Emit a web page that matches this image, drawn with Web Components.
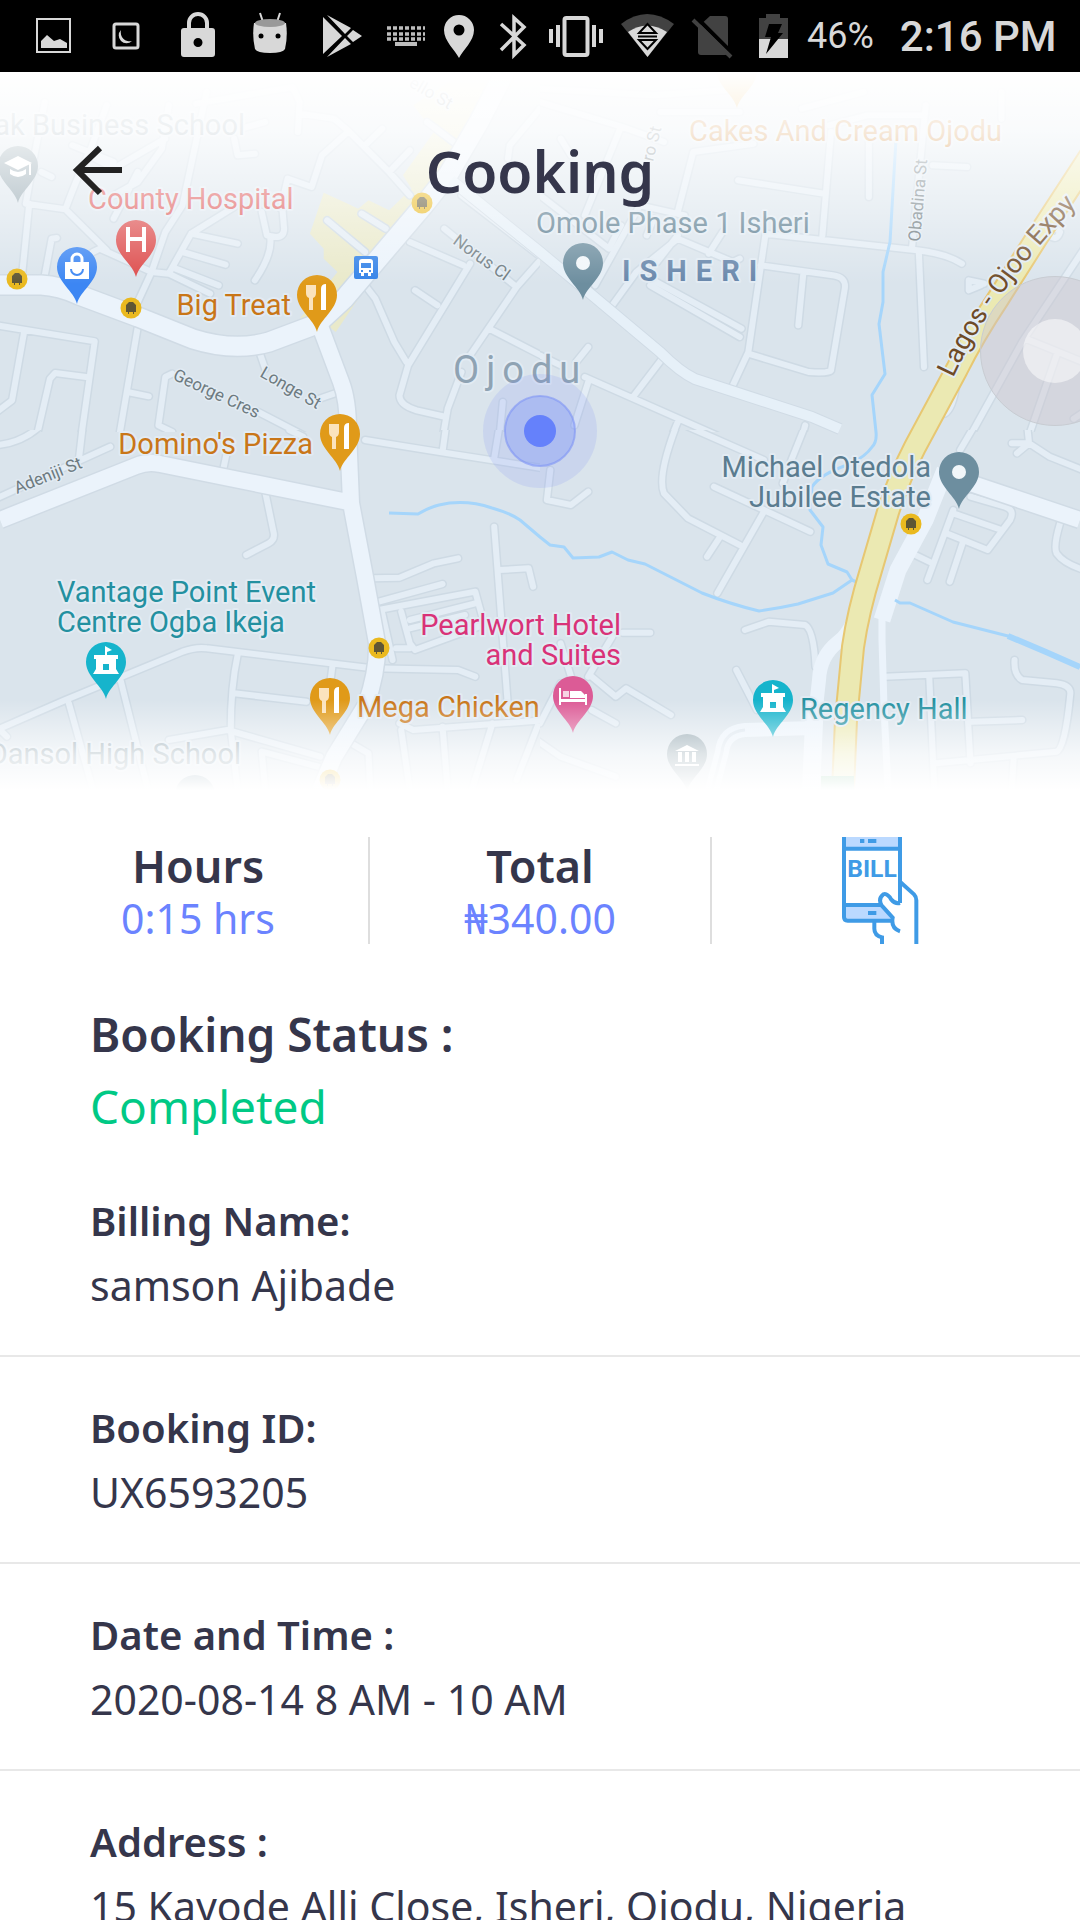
<!DOCTYPE html>
<html lang="en">
<head>
<meta charset="utf-8">
<meta name="viewport" content="width=device-width, initial-scale=1">
<title>Cooking booking</title>
<style>
  html, body { margin: 0; background: #fff; }
  body { font-family: "Noto Sans", "Open Sans", sans-serif; color: #35364b; }
</style>
</head>
<body>
<booking-screen>
  <status-bar slot="status"></status-bar>
  <area-map slot="map"></area-map>
  <screen-header slot="header">Cooking</screen-header>
  <assist-button slot="assist"></assist-button>
  <booking-stats>
    <stat-cell><span slot="label">Hours</span><span slot="value">0:15 hrs</span></stat-cell>
    <stat-cell><span slot="label">Total</span><span slot="value">₦340.00</span></stat-cell>
    <bill-button></bill-button>
  </booking-stats>
  <booking-status><span slot="label">Booking Status :</span>Completed</booking-status>
  <detail-row><span slot="label">Billing Name:</span>samson Ajibade</detail-row>
  <detail-row><span slot="label">Booking ID:</span>UX6593205</detail-row>
  <detail-row><span slot="label">Date and Time :</span>2020-08-14 8 AM - 10 AM</detail-row>
  <detail-row><span slot="label">Address :</span>15 Kayode Alli Close, Isheri, Ojodu, Nigeria</detail-row>
</booking-screen>

<script>
const define = (name, html) => {
  const template = document.createElement('template');
  template.innerHTML = html;
  customElements.define(name, class extends HTMLElement {
    constructor() {
      super();
      this.attachShadow({ mode: 'open' }).append(template.content.cloneNode(true));
    }
  });
};

define('booking-screen', `
  <style>
    :host { display: flex; flex-direction: column; height: 100vh; overflow: hidden; background: #fff; }
    main { flex: 1; min-height: 0; overflow-y: auto; scrollbar-width: none; }
    .hero { position: relative; margin-bottom: 47px; overflow: hidden; }
    .over { position: absolute; inset: 0 0 auto 0; }
    .assist { position: absolute; right: -50px; top: 204px; }
  </style>
  <slot name="status"></slot>
  <main>
    <div class="hero">
      <slot name="map"></slot>
      <div class="over"><slot name="header"></slot></div>
      <div class="assist"><slot name="assist"></slot></div>
    </div>
    <slot></slot>
  </main>`);

define('status-bar', `
  <style>
    :host { display: flex; justify-content: space-between; align-items: center; height: 72px; padding: 0 30px 0 18px;
      background: #000; color: #d8d8d8; font-family: Roboto, sans-serif; box-sizing: border-box; white-space: nowrap; overflow: hidden; }
    .group { display: flex; align-items: center; }
    svg { display: block; height: 72px; fill: #d8d8d8; }
    .battery { font-size: 36px; }
    .clock { font-size: 42px; font-weight: 500; margin-left: 26px; }
  </style>
  <div class="group">
    <svg width="72" viewBox="18 0 72 72" aria-hidden="true"><path d="M37 19h33v33h-33z" fill="none" stroke="#d8d8d8" stroke-width="2"/><path d="M41 48v-7l6-6 7 6 6-2 7 4v5z"/></svg>
    <svg width="72" viewBox="90 0 72 72" aria-hidden="true"><rect x="114" y="24" width="24" height="24" rx="2" fill="none" stroke="#d8d8d8" stroke-width="3"/><path d="M121 30a7 7 0 1 0 11 11a9 9 0 0 1-11-11z"/></svg>
    <svg width="72" viewBox="162 0 72 72" aria-hidden="true"><path fill-rule="evenodd" d="M187 28v-5a11 11 0 0 1 22 0v5h3q3 0 3 3v23q0 3-3 3h-28q-3 0-3-3V31q0-3 3-3zM191 28h14v-5a7 7 0 0 0-14 0zM198 38a4 4 0 1 0 0 9a4 4 0 0 0 0-9z"/></svg>
    <svg width="72" viewBox="234 0 72 72" aria-hidden="true"><path d="M260 13l3 9M280 13l-3 9" stroke="#d8d8d8" stroke-width="2"/><path d="M254 23h32q2 13-1 26-2 4-15 4t-15-4q-3-13-1-26z"/><ellipse cx="270" cy="23" rx="15" ry="4" fill="#999"/><circle cx="261" cy="36" r="2.500" fill="#000"/><circle cx="278" cy="36" r="2.500" fill="#000"/></svg>
    <svg width="72" viewBox="306 0 72 72" aria-hidden="true"><path d="M323 17l19 19-19 18zM327 15l24 13-6 6zM327 57l24-13-6-6zM353 30l9 6-9 6-6-6z"/></svg>
    <svg width="56" viewBox="378 0 56 72" aria-hidden="true"><path d="M387 28h38M387 34h38M387 39h38" stroke="#bdbdbd" stroke-width="3.500" stroke-dasharray="4 2"/><path d="M395 44h22" stroke="#bdbdbd" stroke-width="4"/></svg>
    <svg width="52" viewBox="434 0 52 72" aria-hidden="true"><path fill-rule="evenodd" d="M459 58C455 50 444 41 444 30a15 15 0 0 1 30 0C474 41 463 50 459 58zM459 24.500a5.500 5.500 0 1 0 0 11a5.500 5.500 0 0 0 0-11z"/></svg>
    <svg width="55" viewBox="486 0 55 72" aria-hidden="true"><path d="M501 24l23 21-10 10V18l10 9-23 23" fill="none" stroke="#d8d8d8" stroke-width="3.500"/></svg>
    <svg width="70" viewBox="541 0 70 72" aria-hidden="true"><rect x="564.500" y="18" width="23" height="37" rx="2" fill="none" stroke="#d8d8d8" stroke-width="4"/><path d="M556 25h4v22h-4zM549 29h4v14h-4zM592 25h4v22h-4zM599 29h4v14h-4z"/></svg>
    <svg width="72" viewBox="611 0 72 72" aria-hidden="true"><path d="M621 24q26-20 53 0L647.500 57z" fill="#424242"/><path d="M628 32q19-13 39 0L647.500 57z"/><path d="M639 33l8.500-9 8.500 9zM639 40h17l-8.500 9z" stroke="#000" stroke-width="2"/><path d="M638 36.500h19" stroke="#000" stroke-width="2"/></svg>
    <svg width="58" viewBox="683 0 58 72" aria-hidden="true"><path d="M710 16h15q3 0 3 3v33q0 3-3 3h-24q-3 0-3-3V27z" fill="#424242"/><path d="M696 17l37 37" stroke="#000" stroke-width="4"/><path d="M693 20l38 37" stroke="#424242" stroke-width="4"/></svg>
    <svg width="66" viewBox="741 0 66 72" aria-hidden="true"><path d="M759 18h7v-4h14v4h8v22h-29z" fill="#424242"/><path d="M759 39h29v19h-29z"/><path d="M769 24h13l-4 9h5l-17 21 5-17h-6z" fill="#000"/></svg>
  </div>
  <div class="group"><span class="battery">46%</span><span class="clock">2:16 PM</span></div>`);

define('screen-header', `
  <style>
    :host { display: grid; grid-template-columns: 1fr auto 1fr; align-items: center; height: 198px; padding: 0 64px; box-sizing: border-box; }
    button { justify-self: start; border: 0; padding: 0; background: none; width: 68px; height: 68px; cursor: pointer; }
    svg { display: block; }
    h1 { margin: 0; font-size: 57px; line-height: 80px; font-weight: 600; }
  </style>
  <button aria-label="Back"><svg width="68" height="68" viewBox="64 136 68 68" fill="none" stroke="#222" stroke-width="6"><path d="M122 169H78M100 147L77 169l23 23"/></svg></button>
  <h1><slot></slot></h1>`);

define('assist-button', `
  <style>
    :host { display: block; }
    button { display: grid; place-items: center; width: 150px; height: 150px; padding: 0; border: 1px solid #c8ccd2; border-radius: 50%; background: rgb(205 198 206 / .45); }
    span { width: 64px; height: 64px; border-radius: 50%; background: rgb(255 255 255 / .5); }
  </style>
  <button aria-label="Assistive menu"><span></span></button>`);

define('booking-stats', `
  <style>
    :host { display: flex; height: 107px; margin: 0 28px; }
    ::slotted(*) { flex: 1 1 0; }
    ::slotted(:not(:first-child)) { border-left: 2px solid #dedede; }
  </style><slot></slot>`);

define('stat-cell', `
  <style>
    :host { display: flex; flex-direction: column; align-items: center; justify-content: flex-end; line-height: 52px; white-space: nowrap; }
    .label { font-size: 45px; font-weight: 600; }
    .value { font-size: 41px; color: #6b83ff; }
  </style>
  <div class="label"><slot name="label"></slot></div>
  <div class="value"><slot name="value"></slot></div>`);

define('bill-button', `
  <style>
    :host { display: flex; justify-content: center; }
    button { border: 0; padding: 0; background: none; height: 107px; }
    svg { display: block; }
    text { font: 700 74px Roboto, sans-serif; fill: #3f9be6; stroke: none; }
  </style>
  <button aria-label="Bill"><svg width="80" height="107" viewBox="846 51 240 321" fill="none" stroke="#3f9be6" stroke-width="12">
    <path d="M852 40h168v46H852zM852 255h110l34 46H862q-10 0-10-10z" fill="#bbd9ff" stroke="none"/>
    <path d="M852 40v251q0 11 11 11h136M1020 40v209M852 86h168M852 255h110"/>
    <path d="M900 63h13M924 63h25M924 279h25"/>
    <path d="M1020 249q-14 4-26-10-12-20-24-16-16 12-6 32l34 38q-6 32 22 41M943 304v22q0 20 23 26v30M1020 185l42 38q7 7 7 18v140"/>
    <text x="936" y="170" text-anchor="middle">BILL</text></svg></button>`);

define('booking-status', `
  <style>
    :host { display: block; padding: 54px 90px 8px; font-size: 46px; line-height: 72px; }
    .label { font-weight: 600; }
    .value { color: #00c985; }
  </style>
  <div class="label"><slot name="label"></slot></div><div class="value"><slot></slot></div>`);

define('detail-row', `
  <style>
    :host { display: block; padding: 38px 90px 37px; border-bottom: 2px solid #e8e8e8; font-size: 41px; line-height: 65px; }
    .label { font-size: 40px; font-weight: 600; }
  </style>
  <div class="label"><slot name="label"></slot></div><div><slot></slot></div>`);

define('area-map', `
  <style>
    :host { display: block; }
    svg { display: block; }
    .root { width: 100%; height: auto; }
    path { stroke-linejoin: round; }
    .street { fill: none; stroke-linecap: round; vector-effect: non-scaling-stroke; }
    .edge { stroke: #cedae4; }
    .lane { stroke: #e4edf5; }
    .river { fill: none; stroke: #a5d5fb; stroke-width: 3; }
    text { font-family: Roboto, sans-serif; font-size: 29px; paint-order: stroke; stroke: #e2ebf3; stroke-width: 4px; stroke-linejoin: round; }
    .end { text-anchor: end; }
    .small { font-size: 17px; fill: #6d7a80; stroke-width: 3px; }
    .food { fill: #c97618; } .event { fill: #2390a0; } .hotel { fill: #d93278; } .place { fill: #5a7c8f; } .school { fill: #90a4ae; }
  </style>
  <svg class="root" viewBox="0 72 1080 718" role="img" aria-label="Map of Ojodu">
    <defs>
      <linearGradient id="top" x1="0" y1="0" x2="0" y2="1"><stop offset="0" stop-color="#fff"/><stop offset=".28" stop-color="#fff" stop-opacity=".84"/><stop offset=".6" stop-color="#fff" stop-opacity=".48"/><stop offset="1" stop-color="#fff" stop-opacity="0"/></linearGradient>
      <linearGradient id="bottom" x1="0" y1="0" x2="0" y2="1"><stop offset="0" stop-color="#fff" stop-opacity="0"/><stop offset=".6" stop-color="#fff" stop-opacity=".72"/><stop offset="1" stop-color="#fff"/></linearGradient>
      <path id="pin" d="M0 37C-3 24-20 15-20 0A20 20 0 0 1 20 0C20 15 3 24 0 37Z"/>
      <g id="fork"><path d="M-11-10h10v8q0 4-3 5v12h-4V3q-3-1-3-5z" fill="#fbe3bd"/><path d="M4 15V-6q0-5 5-5v26z" fill="#fff"/></g>
      <g id="castle" fill="#fff"><path fill-rule="evenodd" d="M-12-7h24v4h-2v10l3 5h-26l3-5V-3h-2zM-3 2v6h6V2z"/><path d="M-1-16l7 4-5 2v4h-2z"/></g>
      <g id="stop"><circle r="10.500" fill="#eab91f"/><path d="M-5-3l3-3h4l3 3v7h-2v2h-1v-2h-4v2h-1v-2h-2z" fill="#5f5634"/></g>
      <path class="street" id="r1" d="M-10 760L275 808 235 1100M70 780L35 985-10 1020M250 915L160 903 145 920 105 1100M400 765L345 1100M370 960L432 973M85 395L65 600M75 395L190 412 310 535M190 412Q230 300 260 240L310 100M75 395L100 250 130 90M120 300L150 315M260 250L330 290 480 200M330 370L400 330 470 230 490 100M330 270L210 220M400 300L330 440M440 600L480 480 530 400 600 60M570 95L850 45 870 90 865 180M870 125L970 140 1010 175 1130 300 1190 370M680 200L690 250 740 245M700 170L770 150M440 600L490 605 555 485 680 405M555 485L690 515M530 540L655 578M510 590L635 640M490 605L610 665M440 600L400 690M440 600L290 530 270 540M130 610L150 500 165 498M820 410L825 470Q825 495 800 495L775 490 760 420M785 500Q790 550 740 625M815 410L835 320 905 345 935 250 1010 180M1060 220L1110 170M1130 300L1190 235M950 445L1060 540M1050 425L1120 470M1190 510L1345 580M1290 470L1500 645 1590 540M1365 575L1185 880 1160 970Q1160 1000 1210 1015L1295 1035M1180 870L1145 810 1090 680 1060 640M1205 655L1270 700M1500 645L1365 850M1340 900L1300 1010 1285 1100M1420 770L1590 860M750 830L770 890M500 905L480 915 460 1060 500 1080M750 1020L900 1100M900 990L970 965M1460 990L1450 1100M1568 110L1480 220 1475 260M1240 150L1330 220M1340 370L1590 570"/>
      <path class="street" id="r2" d="M0 370L200 530M0 90L240 165 360 210M235 165L130 430M60 200L90 250M160 640L290 400 420 430M200 530L235 460M310 490L330 440M400 500L560 570 580 560M210 700L280 600 400 500M340 570L400 490M490 545L530 480M320 620L585 770M320 640L580 795M400 420L445 240 620 215M845 180L820 490M575 325L825 365M655 485L1095 535Q1180 545 1225 575M655 485L605 840 560 940M640 580L850 610Q890 615 885 650L845 895Q840 905 780 900L605 845M765 600L750 760M1100 540L1115 885M1080 530L1120 100M1140 280L1240 285M955 200V375M840 160L950 130 1110 130M1340 140V60M0 50L330 70 600 50M350 120L580 120M760 110L940 60M1280 640L1245 655 1245 625 1290 635M1480 490Q1500 510 1510 480L1490 460M1210 930Q1200 1010 1175 1025L1155 1025M355 860L270 975M130 915L600 1130M140 825L105 870M100 1060L140 930M0 850L60 880M400 1050L380 1100M770 1060L760 1100M1580 530L1400 810 1250 1090M1410 800L1600 880M1500 850L1420 1090M1580 1020L1550 1040"/>
      <path class="street" id="r3" d="M-10 205L320 50M240 -10L230 80M-10 45Q60 40 115 -10M650 110L660 60M770 185L795 310Q798 330 780 340L715 375M-10 900L190 810 530 665Q570 650 600 655L1080 715 1330 720 1380 740M690 675Q670 770 670 900L690 1080M680 790L890 815M965 710L960 750M200 820L270 1080M350 750L430 1080M490 930L660 900 930 980M760 965L960 1020M760 965L770 1080M0 900L20 920M1080 445L1160 443 1260 400 1330 385M1100 515L1285 462M1100 540L1380 485 1400 560M1110 550L1140 690M1190 570L1380 520M1190 595L1350 555M1165 545L1190 640 1205 660 1390 590M1150 655L1190 655M1435 290L1475 830M1450 420L1535 415 1548 470M1060 30L1300 70 1580 115M1285 65L1295 -10M1435 85L1450 -10M840 0L880 20M1160 880L1200 900 1590 870M1165 900L1190 1080M1285 890L1300 1080M1430 880L1370 1080M1568 870L1500 1050M1020 940L1070 970 1075 1080"/>
      <path class="street" id="r4" d="M395 -10Q340 140 360 190L430 265 580 345M520 325L485 380M430 -10L650 90M765 0L730 90 705 160M505 170L785 305M650 245L515 490M30 120L20 210 90 225 140 185M595 600L665 575 770 585Q795 600 800 710M570 720L630 840M240 608H320M0 880L60 760M210 620L140 740M60 640L90 740M150 740L220 800 250 775 380 855M150 840L220 880M-10 930L60 980 220 1040M1000 740L1235 730 1250 1000M1130 735L1145 1080M1255 875L1400 870M1150 1000L1500 965Q1525 955 1540 790 1540 765 1500 760L1400 750Q1375 735 1378 690M1370 1080L1375 990M1415 -10L1420 40 1480 80 1600 130M1420 40L1370 40M1420 40L1385 70M1510 280Q1490 350 1500 370 1520 400 1580 420M1250 200L1350 230Q1380 240 1365 270L1300 360 1180 310M1200 250L1340 300M1200 240L1125 450M1230 330L1190 455M1080 370L1140 400M1220 60L1260 -10"/>
    </defs>
    <rect y="72" width="1080" height="718" fill="#dae4ec"/>
    <svg y="72" width="540" height="360" viewBox="0 0 1568 1080" preserveAspectRatio="none" fill="#e9e9ca">
      <path d="M900 485L940 362 1010 395 1040 410 1070 385 1130 415 1195 350 1170 310 1260 180 1200 100 1350 0H1510L1180 510 1060 650 975 780 950 760 870 740 980 600 940 560 940 530z"/>
    </svg>
    <svg y="72" width="540" height="360" viewBox="0 0 1568 1080" preserveAspectRatio="none"><use href="#r1" class="edge" stroke-width="9"/><use href="#r1" class="lane" stroke-width="6"/></svg>
    <svg x="540" y="72" width="540" height="360" viewBox="0 0 1568 1080" preserveAspectRatio="none"><use href="#r2" class="edge" stroke-width="9"/><use href="#r2" class="lane" stroke-width="6"/></svg>
    <svg y="430" width="540" height="360" viewBox="0 0 1568 1080" preserveAspectRatio="none"><use href="#r3" class="edge" stroke-width="9"/><use href="#r3" class="lane" stroke-width="6"/></svg>
    <svg x="540" y="430" width="540" height="360" viewBox="0 0 1568 1080" preserveAspectRatio="none"><use href="#r4" class="edge" stroke-width="9"/><use href="#r4" class="lane" stroke-width="6"/></svg>
    <g fill="none" stroke="#d0dbe5">
      <path stroke-width="22" d="M0 285H41Q60 286 79 295L138 317 193 339Q234 352 269 342L317 324 344 299 424 205 448 175 479 122 510 62"/>
      <path stroke-width="19" d="M320 326L341 382Q348 400 348 430L351 503 365 577 377 643Q378 670 366 705L334 757 320 790M0 520L136 466Q148 461 160 464L348 502M970 483L1080 520"/>
      <path stroke-width="12" d="M451 180L540 252 592 295 660 352Q680 372 695 379L812 417 840 429"/>
    </g>
    <g fill="none" stroke="#ebf3fb">
      <path stroke-width="19" d="M0 285H41Q60 286 79 295L138 317 193 339Q234 352 269 342L317 324 344 299 424 205 448 175 479 122 510 62"/>
      <path stroke-width="16" d="M320 326L341 382Q348 400 348 430L351 503 365 577 377 643Q378 670 366 705L334 757 320 790M0 520L136 466Q148 461 160 464L348 502M970 483L1080 520"/>
      <path stroke-width="10" stroke="#e6f0f8" d="M451 180L540 252 592 295 660 352Q680 372 695 379L812 417 840 429"/>
      <path stroke-width="14" d="M814 728L745 730Q724 732 722 752L712 790"/>
      <path stroke-width="3" stroke="#dbe5ee" d="M745 730Q724 732 722 752L712 790"/>
      <path stroke-width="14" d="M862 590Q855 630 838 642 820 656 819 680L814 725"/><path stroke-width="18" d="M815 700L811 790"/>
      <path stroke-width="17" d="M945 470L925 520 898 570 882 620"/><path stroke-width="7" d="M882 610V640L884 707 888 790"/>
    </g>
    <g class="river">
      <path d="M389 513L418 514Q430 507 439 505 465 499 492 508 510 513 520 520L540 537 550 545 564 547 573 558 599 557 612 552 628 560 645 564 702 593Q730 604 759 611 780 608 798 604L833 593 852 580 859 583M895 600L900 603 910 603 953 622 1008 636 1046 652 1080 667"/>
      <path d="M1008 636L1046 652 1080 667" stroke-width="6"/>
      <path d="M896 139L890 242 883 272V302L879 324 885 374 872 395 876 432Q877 442 872 447 866 456 850 464 820 474 812 487L810 510 823 527 821 545 828 564 847 572 852 580"/>
    </g>
    <g fill="none"><path stroke="#e7c772" stroke-width="24" d="M1092 153L1036 239 998 299Q974 335 957 369L915 447Q899 478 888 512L871 570Q858 612 853 647L846 720 843 790"/>
    <path stroke="#ebe9b2" stroke-width="20" d="M1092 153L1036 239 998 299Q974 335 957 369L915 447Q899 478 888 512L871 570Q858 612 853 647L846 720 843 790"/></g>
    <rect x="821" y="776" width="33" height="14" fill="#69b98a"/>

    <g transform="translate(18 166)" fill="#90a4ae"><use href="#pin"/><path fill="#fff" d="M-14-3L0-10 14-3 0 4zM-8 3q8 6 16 0v5q-8 6-16 0zM11-2h2V9h-2z"/></g>
    <g transform="translate(136 240)" fill="#dd4b4b"><use href="#pin"/><path d="M-8-13V12M8-13V12M-8-1H8" stroke="#fff" stroke-width="4"/></g>
    <g transform="translate(77 267)" fill="#3c86f3"><use href="#pin"/><path fill="#fff" d="M-12-5h24V12h-24z"/><path d="M-5-4v-4a5 5 0 0 1 10 0v4" fill="none" stroke="#fff" stroke-width="3"/><path d="M-6 2a6 6 0 0 0 12 0" fill="none" stroke="#3c86f3" stroke-width="2"/></g>
    <g fill="#e09a19">
      <g transform="translate(317 295)"><use href="#pin"/><use href="#fork"/></g>
      <g transform="translate(340 434)"><use href="#pin"/><use href="#fork"/></g>
      <g transform="translate(330 698)"><use href="#pin"/><use href="#fork"/></g>
      <g transform="translate(737 71)"><use href="#pin"/></g>
    </g>
    <g fill="#6d8e9f">
      <g transform="translate(583 263)"><use href="#pin"/><circle r="7" fill="#f1f6f9"/></g>
      <g transform="translate(959 472)"><use href="#pin"/><circle r="7" fill="#f1f6f9"/></g>
      <g transform="translate(687 754)" fill="#90a4ae"><use href="#pin"/><path fill="#fff" d="M-12-3L0-9 12-3zM-9-2h4V8h-4zM-2-2h4V8h-4zM5-2h4V8H5zM-12 10h24v2h-24z"/></g>
      <use href="#pin" x="195" y="795"/>
    </g>
    <g fill="#16b4cc">
      <g transform="translate(106 662)"><use href="#pin"/><use href="#castle"/></g>
      <g transform="translate(773 700)"><use href="#pin"/><use href="#castle"/></g>
    </g>
    <g transform="translate(573 696)" fill="#dc5b96"><use href="#pin"/><path fill="#fff" d="M-14-8h2V3h24v-5h2V9h-2V6h-24v3h-2zM-3-5H8l4 4v3H-3z"/><rect x="-10" y="-5" width="6" height="6" fill="#f7d4e3"/></g>
    <use href="#stop" x="17" y="279"/><use href="#stop" x="131" y="308"/><use href="#stop" x="422" y="203"/><use href="#stop" x="379" y="648"/><use href="#stop" x="911" y="524"/><use href="#stop" x="330" y="780"/>
    <g transform="translate(354 256)"><rect width="24" height="23" rx="2" fill="#3483e8"/><path fill="#fff" fill-rule="evenodd" d="M5 6q0-3 3-3h8q3 0 3 3v11h-2v3h-3v-3h-4v3H7v-3H5zM7 7v5h10V7zM7 14v2h2v-2zM15 14v2h2v-2z"/></g>

    <text class="school end" x="245" y="135">ak Business School</text>
    <text x="88" y="209" fill="#dd5454">County Hospital</text>
    <text class="food" x="689" y="141">Cakes And Cream Ojodu</text>
    <text class="food end" x="291" y="315">Big Treat</text>
    <text class="food end" x="313" y="454">Domino's Pizza</text>
    <text class="food" x="357" y="717">Mega Chicken</text>
    <text class="place" x="536" y="233">Omole Phase 1 Isheri</text>
    <text x="622" y="281" fill="#6887ab" font-weight="700" style="letter-spacing:9px">ISHERI</text>
    <text x="453" y="383" fill="#8fa3b3" style="font-size:38px;letter-spacing:7px">Ojodu</text>
    <text class="place end" x="931" y="477">Michael Otedola</text>
    <text class="place end" x="931" y="507">Jubilee Estate</text>
    <text class="event" x="57" y="602">Vantage Point Event</text>
    <text class="event" x="57" y="632">Centre Ogba Ikeja</text>
    <text class="event" x="800" y="719">Regency Hall</text>
    <text class="hotel end" x="621" y="635">Pearlwort Hotel</text>
    <text class="hotel end" x="621" y="665">and Suites</text>
    <text class="school end" x="241" y="764">Dansol High School</text>
    <text class="small" transform="translate(920 242) rotate(-85)">Obadina St</text>
    <text class="small" transform="translate(653 162) rotate(-76)">ro St</text>
    <text class="small" transform="translate(408 86) rotate(30)">ello St</text>
    <text class="small" transform="translate(452 243) rotate(36)">Norus Cl</text>
    <text class="small" transform="translate(259 376) rotate(30)">Longe St</text>
    <text class="small" transform="translate(172 379) rotate(25)">George Cres</text>
    <text class="small" transform="translate(17 494) rotate(-22)">Adeniji St</text>
    <path id="expy" fill="none" d="M953 378Q995 288 1078 204"/>
    <text style="fill:#6e4a26;font-size:27px"><textPath href="#expy">Lagos - Ojoo Expy</textPath></text>

    <circle cx="540" cy="431" r="57" fill="#6883fb" fill-opacity=".14"/>
    <circle cx="540" cy="431" r="35" fill="#6883fb" fill-opacity=".3" stroke="#7d92f5" stroke-opacity=".6" stroke-width="2"/>
    <circle cx="540" cy="431" r="16" fill="#6581fb"/>
    <rect y="72" width="1080" height="212" fill="url(#top)"/>
    <rect y="700" width="1080" height="90" fill="url(#bottom)"/>
  </svg>`);
</script>
</body>
</html>
